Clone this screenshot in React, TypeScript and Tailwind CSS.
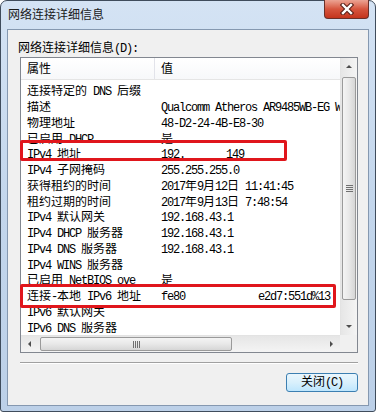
import React from 'react';

const mono = "font-['Liberation_Mono','Noto_Sans_CJK_SC',monospace]";

// CJK glyphs keep their full 12px; Latin runs are squeezed to SimSun's 6px pitch
function Txt({ s }: { s: string }) {
  const parts = s.split(/([\u3000-\u9fff\uff00-\uffef]+)/).filter(Boolean);
  return (
    <>
      {parts.map((p, i) =>
        /[\u3000-\u9fff\uff00-\uffef]/.test(p) ? (
          <span key={i}>{p}</span>
        ) : (
          <span key={i} className="tracking-[-1.2px]">
            {p}
          </span>
        ),
      )}
    </>
  );
}

const rows: [string, React.ReactNode][] = [
  ['连接特定的 DNS 后缀', ''],
  ['描述', <Txt s="Qualcomm Atheros AR9485WB-EG Wireless Network Adapter" />],
  ['物理地址', <Txt s="48-D2-24-4B-E8-30" />],
  ['已启用 DHCP', '是'],
  [
    'IPv4 地址',
    <>
      <Txt s="192." />
      <span className="ml-[41px] tracking-[-1.2px]">149</span>
    </>,
  ],
  ['IPv4 子网掩码', <Txt s="255.255.255.0" />],
  ['获得租约的时间', <Txt s="2017年9月12日 11:41:45" />],
  ['租约过期的时间', <Txt s="2017年9月13日 7:48:54" />],
  ['IPv4 默认网关', <Txt s="192.168.43.1" />],
  ['IPv4 DHCP 服务器', <Txt s="192.168.43.1" />],
  ['IPv4 DNS 服务器', <Txt s="192.168.43.1" />],
  ['IPv4 WINS 服务器', ''],
  ['已启用 NetBIOS ove', '是'],
  [
    '连接-本地 IPv6 地址',
    <>
      <Txt s="fe80" />
      <span className="ml-[73px] tracking-[-1.2px]">e2d7:551d%13</span>
    </>,
  ],
  ['IPv6 默认网关', ''],
  ['IPv6 DNS 服务器', ''],
];

function Arrow({ dir }: { dir: 'up' | 'down' | 'left' | 'right' }) {
  const pts = {
    up: '1,5 4,2 7,5',
    down: '1,2 4,5 7,2',
    left: '5,1 2,4 5,7',
    right: '2,1 5,4 2,7',
  }[dir];
  return (
    <svg width="8" height="8" viewBox="0 0 8 8">
      <polygon points={pts} fill="#4d4d4d" />
    </svg>
  );
}

function VScroll() {
  return (
    <div className="w-[17px] flex flex-col bg-gradient-to-r from-[#e6e6e6] to-[#f4f4f4] border-l border-[#e3e3e3]">
      <div className="h-[17px] flex items-center justify-center">
        <Arrow dir="up" />
      </div>
      <div className="flex-1 pt-[2px] pb-[18px] px-[1px] flex flex-col">
        <div className="h-[223px] rounded-[2px] border border-[#9a9a9a] bg-gradient-to-r from-[#f4f4f4] via-[#e8e8e8] to-[#d6d6d6] flex items-center justify-center">
          <div className="flex flex-col gap-[1px]">
            <div className="w-[7px] h-[1px] bg-[#707070]" />
            <div className="w-[7px] h-[1px] bg-[#707070]" />
            <div className="w-[7px] h-[1px] bg-[#707070]" />
            <div className="w-[7px] h-[1px] bg-[#707070]" />
          </div>
        </div>
      </div>
      <div className="h-[17px] flex items-center justify-center">
        <Arrow dir="down" />
      </div>
    </div>
  );
}

function HScroll() {
  return (
    <div className="flex-1 flex bg-gradient-to-b from-[#e6e6e6] to-[#f4f4f4] border-t border-[#e3e3e3]">
      <div className="w-[17px] flex items-center justify-center">
        <Arrow dir="left" />
      </div>
      <div className="flex-1 py-[1px] pl-[2px]">
        <div className="w-[192px] h-full rounded-[2px] border border-[#9a9a9a] bg-gradient-to-b from-[#f4f4f4] via-[#e8e8e8] to-[#d6d6d6] flex items-center justify-center">
          <div className="flex gap-[1px]">
            <div className="w-[1px] h-[7px] bg-[#707070]" />
            <div className="w-[1px] h-[7px] bg-[#707070]" />
            <div className="w-[1px] h-[7px] bg-[#707070]" />
            <div className="w-[1px] h-[7px] bg-[#707070]" />
          </div>
        </div>
      </div>
      <div className="w-[17px] flex items-center justify-center">
        <Arrow dir="right" />
      </div>
    </div>
  );
}

function CloseGlyph() {
  return (
    <svg width="14" height="12" viewBox="0 0 14 12">
      <path d="M3 2 L11 10 M11 2 L3 10" stroke="#5a2018" strokeWidth="4.5" strokeLinecap="square" />
      <path d="M3 2 L11 10 M11 2 L3 10" stroke="#ffffff" strokeWidth="2.4" strokeLinecap="square" />
    </svg>
  );
}

export default function App() {
  return (
    <div className="w-[376px] h-[413px] bg-white relative text-black">
      <div className="w-[376px] h-[412px] rounded-t-[7px] rounded-b-[3px] border border-[#3f4c5c] bg-gradient-to-b from-[#d4e3f4] via-[#c3d6ec] to-[#bcd0e8] flex flex-col">
        <div className="h-[28px] flex justify-between items-start">
          <div className="pl-[7px] pt-[6px] text-[12px] leading-[14px] text-[#1a1a1a] font-['Noto_Sans_CJK_SC',sans-serif]">
            网络连接详细信息
          </div>
          <div className="-mt-[1px] mr-[6px] w-[45px] h-[19px] rounded-b-[4px] border border-[#6a3029] border-t-0 bg-gradient-to-b from-[#eba393] via-[#d6553e] to-[#c4341c] flex items-center justify-center">
            <CloseGlyph />
          </div>
        </div>

        <div className="flex-1 mx-[6px] mb-[5px] border border-[#8598b0] bg-[#f0f0f0] flex flex-col">
          <div className={`pl-[10px] pt-[11px] h-[27px] text-[12px] leading-[16px] ${mono}`}>
            <Txt s="网络连接详细信息(D):" />
          </div>

          <div className="ml-[12px] mr-[10px] h-[296px] border border-[#828790] bg-white flex flex-col">
            <div className="h-[277px] flex">
              <div className={`flex-1 overflow-hidden text-[12px] ${mono}`}>
                <div className="h-[22px] flex border-b border-[#e5e5e5] bg-gradient-to-b from-white to-[#f7f8fa]">
                  <div className="w-[134px] pl-[6px] pt-[3px] flex items-center border-r border-[#e2e3ea]">属性</div>
                  <div className="flex-1 pl-[6px] pt-[3px] flex items-center">值</div>
                </div>
                <div className="pt-[5px]">
                  {rows.map(([name, value], i) => (
                    <div key={i} className="h-[15.75px] flex items-center leading-[15px]">
                      <div className="w-[134px] pl-[6px] whitespace-nowrap overflow-hidden">
                        <Txt s={name} />
                      </div>
                      <div className="flex-1 pl-[6px] whitespace-nowrap overflow-hidden">{value}</div>
                    </div>
                  ))}
                </div>
              </div>
              <VScroll />
            </div>
            <div className="h-[17px] flex">
              <HScroll />
              <div className="w-[17px] bg-[#f0f0f0]" />
            </div>
          </div>

          <div className="mt-[9px] ml-[12px] mr-[10px] h-[2px] border-t border-[#a0a0a0] border-b border-b-white" />

          <div className="mt-[9px] mr-[10px] flex justify-end">
            <div className={`w-[72px] h-[19px] rounded-[3px] border border-[#3c7fb1] bg-gradient-to-b from-[#eaf6fd] via-[#d9f0fc] to-[#bee6fd] flex items-center justify-center text-[12px] ${mono}`}>
              <Txt s="关闭(C)" />
            </div>
          </div>
        </div>
      </div>

      <div className="absolute left-[20px] top-[140px] w-[267px] h-[21px] border-[3px] border-[#e0161c] rounded-[2px]" />
      <div className="absolute left-[20px] top-[284px] w-[316px] h-[24px] border-[3px] border-[#e0161c] rounded-[2px]" />
    </div>
  );
}
